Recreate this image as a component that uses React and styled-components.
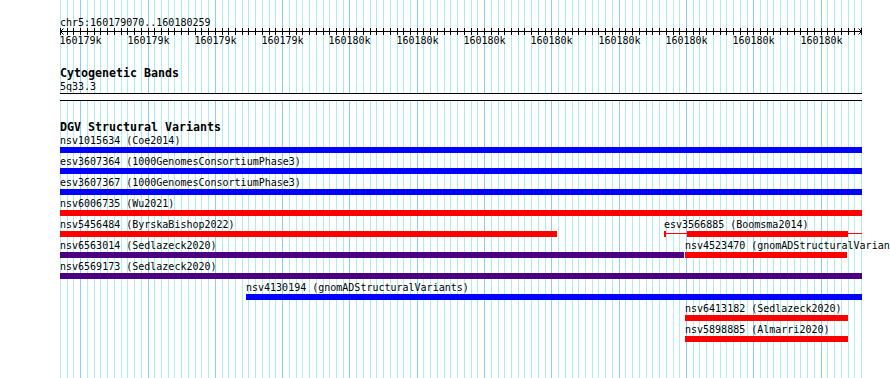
import React from 'react';
import styled, { createGlobalStyle } from 'styled-components';

const START = 160179070;
const END = 160180260;
const TRACK_W = 801;
const STEPS = (END - START) / 10; // 119
const tickX = (k) => Math.round((k * TRACK_W) / STEPS);

const BLUE = '#0000ff';
const RED = '#ff0000';
const PURPLE = '#4b0082';

const GlobalStyle = createGlobalStyle`
  html, body { margin: 0; padding: 0; background: #fff; overflow: hidden; }
  #root { width: 890px; height: 378px; }
`;

const Canvas = styled.div`
  position: relative;
  width: 890px;
  height: 378px;
  overflow: hidden;
  background: #fff;
  color: #000;
  font-family: "DejaVu Sans Mono", "Liberation Mono", monospace;
`;

const GridLayer = styled.svg`
  position: absolute;
  left: 0;
  top: 0;
  width: 890px;
  height: 378px;
  z-index: 0;
  pointer-events: none;
  shape-rendering: crispEdges;
`;

const Content = styled.div`
  position: relative;
  z-index: 1;
  margin-left: 60px;
  width: 802px;
  padding-top: 16px;
  display: flex;
  flex-direction: column;
`;

const PositionLabel = styled.div`
  font-size: 10px;
  line-height: 13px;
  height: 11px;
  white-space: nowrap;
`;

const RulerSvg = styled.svg`
  display: block;
  width: 802px;
  height: 21px;
  overflow: visible;
`;

const SectionTitle = styled.div`
  margin-top: ${(p) => p.$gap}px;
  font-size: 11.63px;
  font-weight: bold;
  line-height: 13px;
  height: 13px;
  white-space: nowrap;
`;

const SmallText = styled.div`
  font-size: 10px;
  line-height: 13px;
  height: 13px;
  white-space: nowrap;
`;

const BandBox = styled.div`
  width: 802px;
  height: 6px;
  background: #fff;
  border-top: 1px solid #000;
  border-bottom: 1px solid #000;
`;

const Lanes = styled.div`
  display: flex;
  flex-direction: column;
`;

const Lane = styled.div`
  display: flex;
  align-items: flex-start;
  height: 21px;
`;

const Feature = styled.div`
  display: flex;
  flex-direction: column;
  flex-shrink: 0;
`;

const FeatureLabel = styled.div`
  font-size: 10px;
  line-height: 13px;
  height: 13px;
  white-space: nowrap;
`;

const Bar = styled.div`
  display: flex;
  align-items: flex-start;
  height: 6px;
  background: ${(p) => (p.$segmented ? 'transparent' : p.$color)};
`;

const Segment = styled.div`
  flex-shrink: 0;
  background: ${(p) => p.$color};
  height: ${(p) => (p.$thin ? '1px' : '6px')};
  margin-top: ${(p) => (p.$thin ? '2px' : '0')};
`;

const lanes = [
  [{ name: 'nsv1015634', src: 'Coe2014', start: 0, end: 802, color: BLUE }],
  [{ name: 'esv3607364', src: '1000GenomesConsortiumPhase3', start: 0, end: 802, color: BLUE }],
  [{ name: 'esv3607367', src: '1000GenomesConsortiumPhase3', start: 0, end: 802, color: BLUE }],
  [{ name: 'nsv6006735', src: 'Wu2021', start: 0, end: 802, color: RED }],
  [
    { name: 'nsv5456484', src: 'ByrskaBishop2022', start: 0, end: 497, color: RED },
    {
      name: 'esv3566885',
      src: 'Boomsma2014',
      start: 604,
      end: 802,
      color: RED,
      parts: [
        { w: 2, thin: false },
        { w: 21, thin: true },
        { w: 161, thin: false },
        { w: 14, thin: true },
      ],
    },
  ],
  [
    { name: 'nsv6563014', src: 'Sedlazeck2020', start: 0, end: 624, color: PURPLE },
    { name: 'nsv4523470', src: 'gnomADStructuralVariants', start: 625, end: 787, color: RED },
  ],
  [{ name: 'nsv6569173', src: 'Sedlazeck2020', start: 0, end: 802, color: PURPLE }],
  [{ name: 'nsv4130194', src: 'gnomADStructuralVariants', start: 186, end: 802, color: BLUE }],
  [{ name: 'nsv6413182', src: 'Sedlazeck2020', start: 625, end: 788, color: RED }],
  [{ name: 'nsv5898885', src: 'Almarri2020', start: 625, end: 788, color: RED }],
];

const ticks = Array.from({ length: STEPS + 1 }, (_, k) => ({
  k,
  x: tickX(k),
  major: k % 10 === 3,
  label: `${Math.round((START + k * 10) / 1000)}k`,
}));

function Grid() {
  return (
    <GridLayer viewBox="0 0 890 378">
      {ticks.map((t) => (
        <line
          key={t.k}
          x1={60 + t.x + 0.5}
          x2={60 + t.x + 0.5}
          y1={0}
          y2={378}
          stroke={t.major ? '#87cefa' : '#afeeee'}
          strokeWidth={1}
        />
      ))}
    </GridLayer>
  );
}

function Ruler() {
  return (
    <RulerSvg viewBox="0 0 802 21">
      <g stroke="#000" strokeWidth="1" fill="none" shapeRendering="crispEdges">
        <line x1={0} x2={801.5} y1={4.5} y2={4.5} />
        {ticks.map((t) => (
          <line key={t.k} x1={t.x + 0.5} x2={t.x + 0.5} y1={1} y2={8} />
        ))}
      </g>
      <g stroke="#000" strokeWidth="1" fill="none">
        <polyline points="3.5,1.5 0.5,4.5 3.5,7.5" />
        <polyline points="798.5,1.5 801.5,4.5 798.5,7.5" />
      </g>
      <g fontFamily='"DejaVu Sans Mono", monospace' fontSize="10" fill="#000" textAnchor="middle">
        {ticks
          .filter((t) => t.major)
          .map((t) => (
            <text key={t.k} x={t.x + 0.5} y={17}>
              {t.label}
            </text>
          ))}
      </g>
    </RulerSvg>
  );
}

function FeatureItem({ f, offset }) {
  const width = f.end - f.start;
  return (
    <Feature style={{ width, marginLeft: offset }}>
      <FeatureLabel>{`${f.name} (${f.src})`}</FeatureLabel>
      <Bar $color={f.color} $segmented={!!f.parts}>
        {f.parts &&
          f.parts.map((p, i) => (
            <Segment key={i} $color={f.color} $thin={p.thin} style={{ width: p.w }} />
          ))}
      </Bar>
    </Feature>
  );
}

export default function App() {
  return (
    <>
      <GlobalStyle />
      <Canvas>
        <Grid />
        <Content>
          <PositionLabel>chr5:160179070..160180259</PositionLabel>
          <Ruler />
          <SectionTitle $gap={19}>Cytogenetic Bands</SectionTitle>
          <SmallText>5q33.3</SmallText>
          <BandBox />
          <SectionTitle $gap={20}>DGV Structural Variants</SectionTitle>
          <Lanes>
            {lanes.map((lane, i) => {
              let prev = 0;
              return (
                <Lane key={i}>
                  {lane.map((f) => {
                    const offset = f.start - prev;
                    prev = f.end;
                    return <FeatureItem key={f.name} f={f} offset={offset} />;
                  })}
                </Lane>
              );
            })}
          </Lanes>
        </Content>
      </Canvas>
    </>
  );
}
